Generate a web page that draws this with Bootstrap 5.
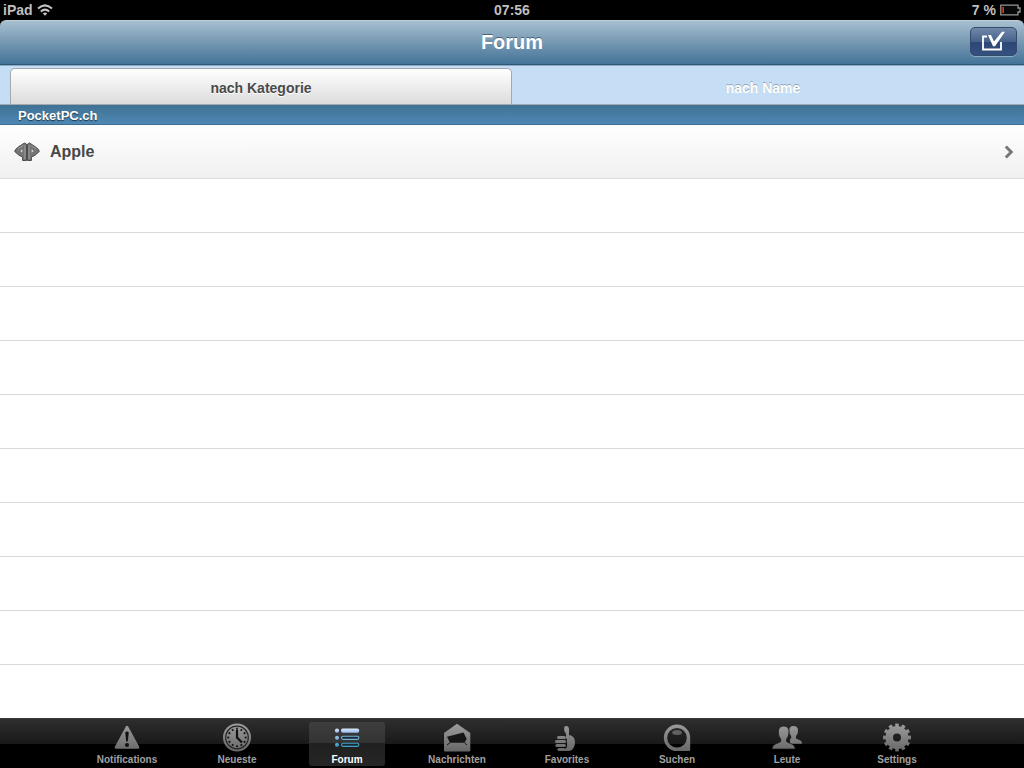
<!DOCTYPE html>
<html lang="de">
<head>
<meta charset="utf-8">
<meta name="viewport" content="width=device-width, initial-scale=1">
<title>Forum</title>
<link href="https://cdn.jsdelivr.net/npm/bootstrap@5.3.0/dist/css/bootstrap.min.css" rel="stylesheet">
<style>
body { font-family: "Liberation Sans", Arial, sans-serif; font-weight: 700; background: #000; }
svg { display: block; flex-shrink: 0; }
.status-bar { height: 20px; padding: 0 3px; font-size: 14px; line-height: 20px; color: #bfbfbf; }
.title-bar { height: 45px; padding: 0 7px 2px; background: linear-gradient(#a7bfd0, #7698b1 50%, #437499); border-top: 1px solid #bdcdd8; border-bottom: 1px solid #2b5878; border-radius: 6px 6px 0 0; }
.title-bar h1 { font-size: 20px; line-height: 24px; font-weight: 700; color: #fff; text-shadow: 0 -1px 0 #47637a; }
.compose { width: 47px; height: 29px; padding: 0; border: 1px solid #334c6b; border-radius: 5px; background: linear-gradient(#7088a8, #46618b 50%, #2c4676 51%, #35517f); box-shadow: 0 1px 0 #8eacc1; }
.segments { height: 40px; padding: 2px 10px 0; background: #c5def5; border-top: 1px solid #8fabc1; border-bottom: 1px solid #a2a9af; }
.segment { padding: 2px 0 0; border: 1px solid transparent; border-bottom: 0; background: none; font-size: 14px; line-height: 20px; font-weight: 700; color: #fff; text-shadow: 0 -1px 0 #8fa5b8; }
.segment.active { color: #4a4a4a; text-shadow: 0 1px 0 #fff; background: linear-gradient(#fff, #dcdcdc); border-color: #a2a9af; border-radius: 5px 5px 0 0; }
.section-title { height: 20px; padding: 3px 18px 0; font-size: 13px; line-height: 20px; font-weight: 700; color: #fff; text-shadow: 0 1px 1px #234; background: linear-gradient(#3f7194, #4e88b3); border-bottom: 1px solid #3c6e93; }
.forum-row { height: 54px; gap: 10px; padding: 0 10px 0 14px; font-size: 16px; color: #484848; background: linear-gradient(#fff, #f0f0f0); border-bottom: 1px solid #dcdcdc; }
.forum-row:hover { color: #222; }
.blank-rows { background: #fff repeating-linear-gradient(transparent 0 53px, #d9d9d9 53px 54px); }
.tab-strip { height: 50px; gap: 34px; padding-top: 3px; border-top: 1px solid #3a3a3a; background: linear-gradient(#2e2e2e, #191919 25px, #000 25px); }
.tab-link { width: 76px; height: 44px; border-radius: 3px; font-size: 10px; line-height: 16px; color: #a0a0a0; text-decoration: none; }
.tab-link.active { color: #fff; background: linear-gradient(#3e3e3e, #333 21px, #202020 21px, #262626); }
.glyph { fill: url(#metal); }
.cut { fill: #161616; }
</style>
</head>
<body>
<svg width="0" height="0" class="position-absolute" aria-hidden="true">
  <defs>
    <linearGradient id="metal" gradientUnits="userSpaceOnUse" x1="0" y1="0" x2="0" y2="30"><stop stop-color="#a0a0a0"/><stop offset="1" stop-color="#666"/></linearGradient>
    <linearGradient id="blue" x1="0" y1="0" x2="0" y2="1"><stop stop-color="#dce8fb"/><stop offset="1" stop-color="#94b9ee"/></linearGradient>
  </defs>
</svg>
<div class="d-flex flex-column vh-100 overflow-hidden">
  <header>
    <div class="status-bar row g-0">
      <div class="col d-flex align-items-center gap-1"><span>iPad</span>
        <svg width="16" height="12" viewBox="0 0 16 12" fill="none" stroke="#c5c5c5" stroke-width="2"><path d="M1 4.6Q8-1.8 15 4.6M3.8 7.5Q8 3.8 12.2 7.5"/><path d="M8 11.7 5.8 9.4Q8 7.8 10.2 9.4Z" fill="#c5c5c5" stroke="none"/></svg>
      </div>
      <div class="col text-center">07:56</div>
      <div class="col d-flex align-items-center justify-content-end gap-1"><span>7 %</span>
        <svg width="21" height="12" viewBox="0 0 21 12"><path d="M.8 1.2H18V4H20V8H18V10.8H.8Z" fill="#080808" stroke="#929992" stroke-width="1.3"/><path d="M2.3 3H4V9H2.3Z" fill="#d43820"/></svg>
      </div>
    </div>
    <div class="title-bar row g-0 align-items-center">
      <div class="col"></div>
      <h1 class="col-auto m-0">Forum</h1>
      <div class="col d-flex justify-content-end">
        <button type="button" class="compose btn d-flex align-items-center justify-content-center" aria-label="Auswählen">
          <svg width="25" height="21" viewBox="0 0 25 21" fill="none" stroke="#fff"><path d="M6 5.5H2V18.5H20V11" stroke-width="1.8"/><path d="M7 4H10L13 10.5 21 .8H24L14 15.3H12Z" fill="#fff" stroke="none"/></svg>
        </button>
      </div>
    </div>
    <div class="segments d-flex" role="tablist">
      <button type="button" class="segment active w-50" role="tab" aria-selected="true">nach Kategorie</button>
      <button type="button" class="segment w-50" role="tab" aria-selected="false">nach Name</button>
    </div>
  </header>
  <main class="flex-grow-1 d-flex flex-column overflow-hidden">
    <h2 class="section-title m-0 d-flex align-items-center">PocketPC.ch</h2>
    <a href="#apple" class="forum-row d-flex align-items-center text-decoration-none">
      <svg width="26" height="20" viewBox="0 0 26 20"><g fill="#747474" stroke="#4c4c4c"><path d="M12.5 2.2V18.5H8.6V15.2L5 13.2 .7 9.5Q.6 7.5 5 4.5L10.5 1Z"/><path d="M13.5 2.2V18.5H17.4V15.2L21 13.2 25.3 9.5Q25.4 7.5 21 4.5L15.5 1Z"/></g><path d="M9 3.5 3.5 7M17 3.5 22.5 7M11 3V17M15 3V17" stroke="#a0a0a0" stroke-width=".9"/><path d="M8.3 7.3V10.5L6.3 9ZM17.7 7.3V10.5L19.7 9Z" fill="#ddd"/></svg>
      <span class="flex-grow-1">Apple</span>
      <svg width="10" height="14" viewBox="0 0 10 14" fill="none" stroke="#777" stroke-width="3"><path d="M1.8 1.5 7.2 7 1.8 12.5"/></svg>
    </a>
    <div class="blank-rows flex-grow-1"></div>
  </main>
  <nav class="tab-strip d-flex justify-content-center flex-shrink-0" aria-label="Navigation">
    <a href="#notifications" class="tab-link d-flex flex-column align-items-center"><svg width="30" height="30" viewBox="0 0 30 30"><path class="glyph" d="M14 4.2Q15 3.2 16 4.2L27.4 25Q27.8 26.7 26 26.7H4Q2.2 26.7 2.7 25Z"/><path d="M13.2 10.2Q15 8.6 16.8 10.2L15.8 19.5H14.2Z" fill="#111"/><circle cx="15" cy="23" r="2" fill="#111"/></svg>Notifications</a>
    <a href="#neueste" class="tab-link d-flex flex-column align-items-center"><svg width="30" height="30" viewBox="0 0 30 30"><circle class="glyph" cx="15" cy="15.5" r="14"/><circle cx="15" cy="15.5" r="11.3" fill="none" stroke="#252525" stroke-width="1.2"/><circle cx="15" cy="15.5" r="8.7" fill="none" stroke="#151515" stroke-width="2" pathLength="48" stroke-dasharray="1.6 2.4" stroke-dashoffset=".8"/><path d="M15 8V15.5L20 20.5" fill="none" stroke="#111" stroke-width="2.2"/></svg>Neueste</a>
    <a href="#forum" class="tab-link active d-flex flex-column align-items-center" aria-current="page"><svg width="30" height="30" viewBox="0 0 30 30"><g fill="url(#blue)"><circle cx="5" cy="8.7" r="2.1"/><rect x="9" y="6.6" width="18.2" height="4.2" rx="1.8"/></g><circle cx="5" cy="15.8" r="2" fill="#8abce2"/><circle cx="5" cy="22.8" r="2" fill="#49a4cd"/><rect x="9.5" y="14.2" width="17.4" height="3.2" rx="1.6" fill="#182831" stroke="#73b5db" stroke-width="1.1"/><rect x="9.5" y="21.2" width="17.4" height="3.2" rx="1.6" fill="#182831" stroke="#43a2c9" stroke-width="1.1"/></svg>Forum</a>
    <a href="#nachrichten" class="tab-link d-flex flex-column align-items-center"><svg width="30" height="30" viewBox="0 0 30 30"><path class="glyph" d="M15 1.7 28.3 11V28.5Q28.3 29.5 27.3 29.5H3Q2 29.5 2 28.5V11Z"/><path class="cut" d="M5 14.7 21.5 10.4 24.7 17 22.5 20.8H8Z"/><path d="M8 20.8 5 23M22.5 20.8 25 23" stroke="#161616"/></svg>Nachrichten</a>
    <a href="#favorites" class="tab-link d-flex flex-column align-items-center"><svg width="30" height="30" viewBox="0 0 30 30"><g class="glyph"><path d="M12.2 5.8Q12.2 4 14 4 16.8 4 17 7V13Q23 14 23 20 23 27.5 17.5 29H13V26.8Q15.3 26 15 23.8 15.5 21.5 14.8 19.8 15.4 17.5 13.8 15.6 15 12 12.2 9Z"/><rect x="5" y="14" width="8.8" height="3" rx="1.5"/><rect x="3" y="18" width="11" height="3" rx="1.5"/><rect x="3.4" y="22" width="10.6" height="3" rx="1.5"/><rect x="5.4" y="26" width="8" height="3" rx="1.5"/></g></svg>Favorites</a>
    <a href="#suchen" class="tab-link d-flex flex-column align-items-center"><svg width="30" height="30" viewBox="0 0 30 30"><path class="glyph" fill-rule="evenodd" d="M28.2 15.8V28Q28.2 29 27.2 29H15A13.2 13.2 0 1 1 28.2 15.8ZM15 6A9.8 9.8 0 1 0 15 25.6 9.8 9.8 0 1 0 15 6Z"/><path d="M10 10.5Q10.5 8 15 8T20 10.5Q19.5 13 15 13T10 10.5Z" fill="#606060"/></svg>Suchen</a>
    <a href="#leute" class="tab-link d-flex flex-column align-items-center"><svg width="30" height="30" viewBox="0 0 30 30"><path class="glyph" d="M21.5 4Q26 4 26 8.5 26 12.3 24 14V16.5L28.5 18.5Q30 19.3 30 21.7H18V17L19.2 16.2V14Q17.2 12.3 17.2 8.5 17.2 4 21.5 4Z"/><path class="glyph" d="M11.7 4Q17 4.2 17 10 17 14.5 14.6 17V19.7L20.6 22.5Q23 23.8 23.3 27H0Q.2 23.8 2.7 22.5L8.7 19.7V17Q6.3 14.5 6.3 10 6.4 4.2 11.7 4Z" stroke="#151515" stroke-width=".7"/></svg>Leute</a>
    <a href="#settings" class="tab-link d-flex flex-column align-items-center"><svg width="30" height="30" viewBox="0 0 30 30"><g fill="none" stroke="url(#metal)"><circle cx="15" cy="15.5" r="7.8" stroke-width="7.6"/><circle cx="15" cy="15.5" r="12.3" stroke-width="3.4" pathLength="24" stroke-dasharray="1.1 .9" stroke-dashoffset=".55"/></g></svg>Settings</a>
  </nav>
</div>
<script src="https://cdn.jsdelivr.net/npm/bootstrap@5.3.0/dist/js/bootstrap.bundle.min.js"></script>
</body>
</html>
